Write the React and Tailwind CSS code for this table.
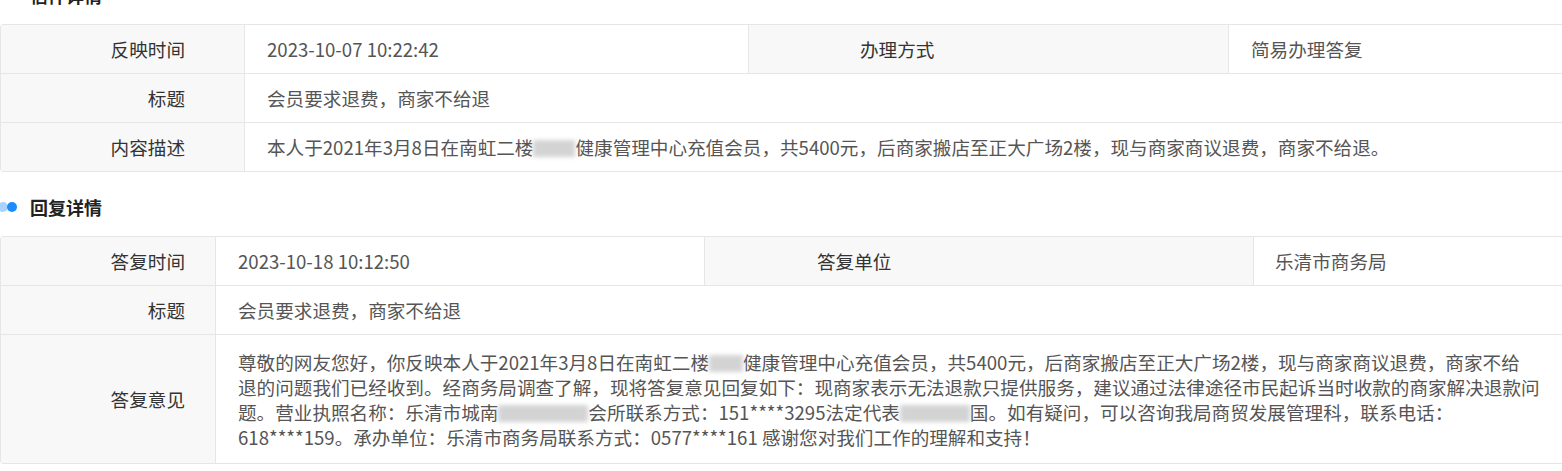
const Blur = ({ w }) => (
    <span className={`inline-block h-[17px] align-[-2px] bg-[#c9c9c9] blur-[2px] opacity-80 ${w}`} />
);

const Heading = ({ title }) => (
    <div className="flex items-center h-[24px]">
        <svg width="18" height="10" viewBox="0 0 18 10">
            <circle cx="3" cy="5" r="5" fill="#a9d3ff" />
            <circle cx="12" cy="5" r="5" fill="#1a8cff" />
        </svg>
        <span className="ml-[12px] text-[18px] font-bold text-[#222] leading-none">{title}</span>
    </div>
);

const App = () => {
    return (
        <div className="w-[1562px] h-[471px] overflow-hidden bg-white font-['Noto_Sans_CJK_SC','Microsoft_YaHei',sans-serif]">
            <div className="-mt-[17px]">
                <Heading title="信件详情" />

                <div className="mt-[17px] w-[1600px] border border-[#e6e6e6] rounded-l-[3px] text-[18.6px]">
                    <div className="flex h-[49px] border-b border-[#e6e6e6]">
                        <div className="w-[244px] shrink-0 bg-[#f8f8f8] border-r border-[#e6e6e6] flex items-center justify-end pr-[59px] text-[#333]">反映时间</div>
                        <div className="w-[504px] shrink-0 border-r border-[#e6e6e6] flex items-center pl-[22px] text-[#555]">2023-10-07 10:22:42</div>
                        <div className="w-[480px] shrink-0 bg-[#f8f8f8] border-r border-[#e6e6e6] flex items-center pl-[111px] text-[#333]">办理方式</div>
                        <div className="flex-1 flex items-center pl-[22px] text-[#555]">简易办理答复</div>
                    </div>
                    <div className="flex h-[49px] border-b border-[#e6e6e6]">
                        <div className="w-[244px] shrink-0 bg-[#f8f8f8] border-r border-[#e6e6e6] flex items-center justify-end pr-[59px] text-[#333]">标题</div>
                        <div className="flex-1 flex items-center pl-[22px] text-[#555]">会员要求退费，商家不给退</div>
                    </div>
                    <div className="flex h-[48px]">
                        <div className="w-[244px] shrink-0 bg-[#f8f8f8] border-r border-[#e6e6e6] flex items-center justify-end pr-[59px] text-[#333]">内容描述</div>
                        <div className="flex-1 flex items-center pl-[22px] text-[#555] whitespace-nowrap">
                            <span>本人于2021年3月8日在南虹二楼<Blur w="w-[42px]" />健康管理中心充值会员，共5400元，后商家搬店至正大广场2楼，现与商家商议退费，商家不给退。</span>
                        </div>
                    </div>
                </div>

                <div className="mt-[23px]">
                    <Heading title="回复详情" />
                </div>

                <div className="mt-[17px] w-[1600px] border border-[#e6e6e6] rounded-l-[3px] text-[18.6px]">
                    <div className="flex h-[49px] border-b border-[#e6e6e6]">
                        <div className="w-[215px] shrink-0 bg-[#f8f8f8] border-r border-[#e6e6e6] flex items-center justify-end pr-[30px] text-[#333]">答复时间</div>
                        <div className="w-[489px] shrink-0 border-r border-[#e6e6e6] flex items-center pl-[22px] text-[#555]">2023-10-18 10:12:50</div>
                        <div className="w-[549px] shrink-0 bg-[#f8f8f8] border-r border-[#e6e6e6] flex items-center pl-[112px] text-[#333]">答复单位</div>
                        <div className="flex-1 flex items-center pl-[21px] text-[#555]">乐清市商务局</div>
                    </div>
                    <div className="flex h-[49px] border-b border-[#e6e6e6]">
                        <div className="w-[215px] shrink-0 bg-[#f8f8f8] border-r border-[#e6e6e6] flex items-center justify-end pr-[30px] text-[#333]">标题</div>
                        <div className="flex-1 flex items-center pl-[22px] text-[#555]">会员要求退费，商家不给退</div>
                    </div>
                    <div className="flex h-[128px]">
                        <div className="w-[215px] shrink-0 bg-[#f8f8f8] border-r border-[#e6e6e6] flex items-center justify-end pr-[30px] text-[#333]">答复意见</div>
                        <div className="flex-1 flex flex-col justify-center pl-[22px] text-[#555] leading-[25px] whitespace-nowrap">
                            <div>尊敬的网友您好，你反映本人于2021年3月8日在南虹二楼<Blur w="w-[34px]" />健康管理中心充值会员，共5400元，后商家搬店至正大广场2楼，现与商家商议退费，商家不给</div>
                            <div>退的问题我们已经收到。经商务局调查了解，现将答复意见回复如下：现商家表示无法退款只提供服务，建议通过法律途径市民起诉当时收款的商家解决退款问</div>
                            <div>题。营业执照名称：乐清市城南<Blur w="w-[90px]" />会所联系方式：151****3295法定代表<Blur w="w-[70px]" />国。如有疑问，可以咨询我局商贸发展管理科，联系电话：</div>
                            <div>618****159。承办单位：乐清市商务局联系方式：0577****161 感谢您对我们工作的理解和支持！</div>
                        </div>
                    </div>
                </div>
            </div>
        </div>
    );
};

export default App;
